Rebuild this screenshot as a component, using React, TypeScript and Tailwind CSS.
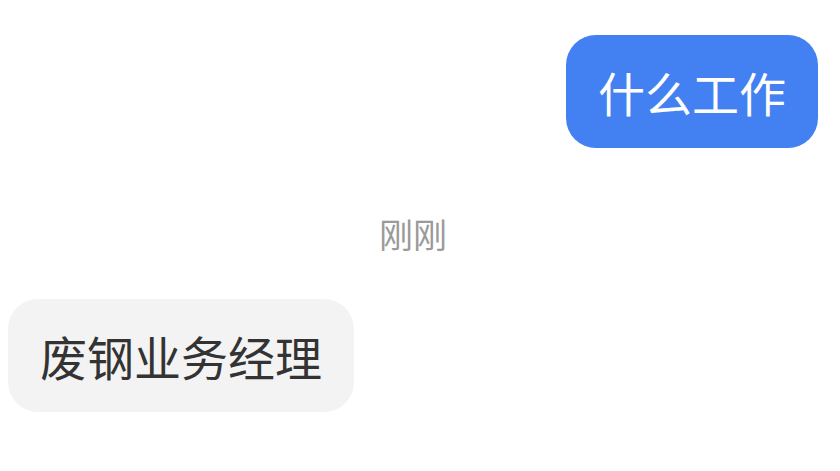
export default function App() {
  return (
    <div
      className="w-[840px] h-[471px] bg-white overflow-hidden flex flex-col pl-[8px] pr-[22px] pt-[35px]"
      style={{ fontFamily: '"Noto Sans CJK SC", "Noto Sans", sans-serif' }}
    >
      {/* outgoing */}
      <div className="flex justify-end">
        <div className="h-[113px] px-[32px] flex items-center rounded-[30px] bg-[#4381f2] text-white text-[47px] leading-none">
          什么工作
        </div>
      </div>

      {/* time */}
      <div className="h-[151px] pt-[20px] flex items-center justify-center text-[34px] leading-none text-[#9a9a9a]">
        刚刚
      </div>

      {/* incoming */}
      <div className="flex justify-start">
        <div className="h-[113px] px-[32px] flex items-center rounded-[30px] bg-[#f3f3f3] text-[#333333] text-[47px] leading-none">
          废钢业务经理
        </div>
      </div>
    </div>
  );
}
